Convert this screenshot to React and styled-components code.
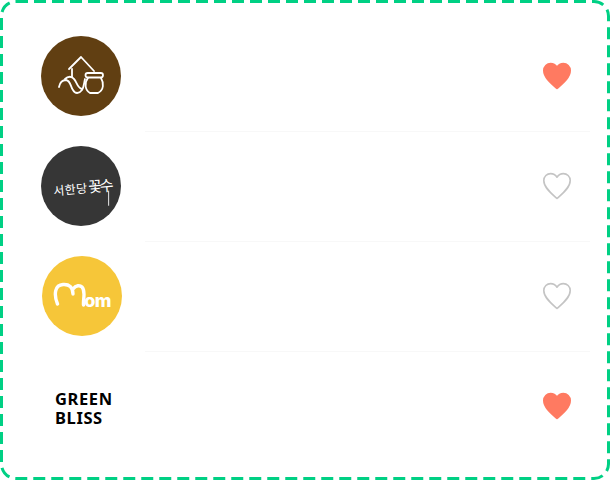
import styled, { createGlobalStyle } from "styled-components";

const GlobalStyle = createGlobalStyle`
  html, body {
    margin: 0;
    padding: 0;
    background: #fff;
  }
`;

const brands = [
  { id: "jar", liked: true },
  { id: "script", liked: false },
  { id: "mom", liked: false },
  { id: "bliss", liked: true },
];

const JarMark = () => (
  <svg width="80" height="80" viewBox="0 0 80 80" fill="none" stroke="#fff" strokeWidth="1.8" strokeLinecap="round" strokeLinejoin="round">
    <path d="M28 33 L40 21 L53 35" />
    <path d="M31 33 L31 41" />
    <path d="M24 43 C27 40 31 40 33 43 C36 46 36 52 41 53" />
    <path d="M18 51 C19 46 22 44 25 44 C30 45 29 50 32 54 C34 58 38 58 41 54 C43 51 43 47 44 43" />
    <rect x="44.5" y="37" width="17.5" height="4.5" rx="2.2" />
    <path d="M47 42 C43 47 44 54 49 57 L57 57 C63 54 63 47 60 42" />
  </svg>
);

const HeartIcon = ({ liked }) => (
  <svg width="30" height="28" viewBox="0 0 30 28">
    <path
      d="M15 26.4 C10 22 1.8 16 1.8 8.6 C1.8 4.4 5 1.6 8.6 1.6 C11.2 1.6 13.6 3 15 5.2 C16.4 3 18.8 1.6 21.4 1.6 C25 1.6 28.2 4.4 28.2 8.6 C28.2 16 20 22 15 26.4 Z"
      fill={liked ? "#ff7a61" : "none"}
      stroke={liked ? "#ff7a61" : "#c4c4c4"}
      strokeWidth="1.6"
      strokeLinejoin="round"
    />
  </svg>
);

const Logo = ({ id }) => {
  if (id === "jar") {
    return (
      <Circle $bg="#613f12">
        <JarMark />
      </Circle>
    );
  }
  if (id === "script") {
    return (
      <Circle $bg="#363636">
        <ScriptMark>
          서한당<strong>꽃수</strong>
        </ScriptMark>
      </Circle>
    );
  }
  if (id === "mom") {
    return (
      <Circle $bg="#f6c639" $shift>
        <MomMark>
          <svg width="34" height="26" viewBox="0 0 34 26" fill="none" stroke="#fff" strokeWidth="3.4" strokeLinecap="round">
            <path d="M4.5 22 C0.5 12 2 3 10 2.5 C16 2 20 5 20 12 M20 7 C23 3 27 3 29 5 C33 9 30 16 30.5 23" />
          </svg>
          <MomText>om</MomText>
        </MomMark>
      </Circle>
    );
  }
  return (
    <Circle>
      <BlissMark>
        GREEN
        <br />
        BLISS
      </BlissMark>
    </Circle>
  );
};

export default function App() {
  return (
    <>
      <GlobalStyle />
      <Frame>
        <Dashes width="610" height="480">
          <rect x="1.5" y="1.5" width="607" height="477" rx="14.5" fill="none" stroke="#00d084" strokeWidth="3" strokeDasharray="12 6" />
        </Dashes>
        {brands.map((brand, index) => (
          <Row key={brand.id}>
            <Logo id={brand.id} />
            <Body $last={index === brands.length - 1}>
              <HeartIcon liked={brand.liked} />
            </Body>
          </Row>
        ))}
      </Frame>
    </>
  );
}

const Frame = styled.div`
  position: relative;
  box-sizing: border-box;
  width: 610px;
  height: 480px;
  padding: 22px 20px 0 41px;
  display: flex;
  flex-direction: column;
  background: #fff;
`;

const Dashes = styled.svg`
  position: absolute;
  top: 0;
  left: 0;
  pointer-events: none;
`;

const Row = styled.div`
  height: 110px;
  display: flex;
  align-items: stretch;
  gap: 24px;
`;

const Circle = styled.div`
  position: relative;
  width: 80px;
  height: 80px;
  flex: none;
  margin: 14px 0 16px;
  transform: ${(p) => (p.$shift ? "translateX(1px)" : "none")};
  border-radius: 50%;
  background: ${(p) => p.$bg || "#fff"};
  display: flex;
  align-items: center;
  justify-content: center;
  overflow: hidden;
`;

const Body = styled.div`
  flex: 1;
  display: flex;
  align-items: center;
  justify-content: flex-end;
  padding: 0 18px 2px 0;
  border-bottom: ${(p) => (p.$last ? "none" : "1px solid #f8f8f8")};
`;

const ScriptMark = styled.div`
  position: relative;
  font-family: "Noto Sans CJK KR", sans-serif;
  font-size: 12px;
  font-weight: 400;
  color: #fff;
  white-space: nowrap;
  letter-spacing: 0.4px;
  margin-left: 2px;
  transform: rotate(-5deg);

  strong {
    font-size: 15px;
    font-weight: 400;
    letter-spacing: -2.5px;
    margin-left: 1px;
  }

  &::after {
    content: "";
    position: absolute;
    right: 3px;
    top: 17px;
    width: 1px;
    height: 15px;
    background: #e8e8e8;
    transform: rotate(5deg);
  }
`;

const MomMark = styled.div`
  display: flex;
  align-items: flex-end;
  margin-top: -2px;
`;

const MomText = styled.span`
  font-family: "Inter", sans-serif;
  font-size: 18px;
  line-height: 15px;
  font-weight: 800;
  letter-spacing: -0.6px;
  color: #fff;
  margin-left: -3px;
`;

const BlissMark = styled.div`
  font-family: "Noto Sans", sans-serif;
  font-size: 16.5px;
  line-height: 19px;
  font-weight: 700;
  letter-spacing: 0.6px;
  color: #000;
  width: 66px;
  padding-left: 14px;
  margin-top: 4px;
`;
